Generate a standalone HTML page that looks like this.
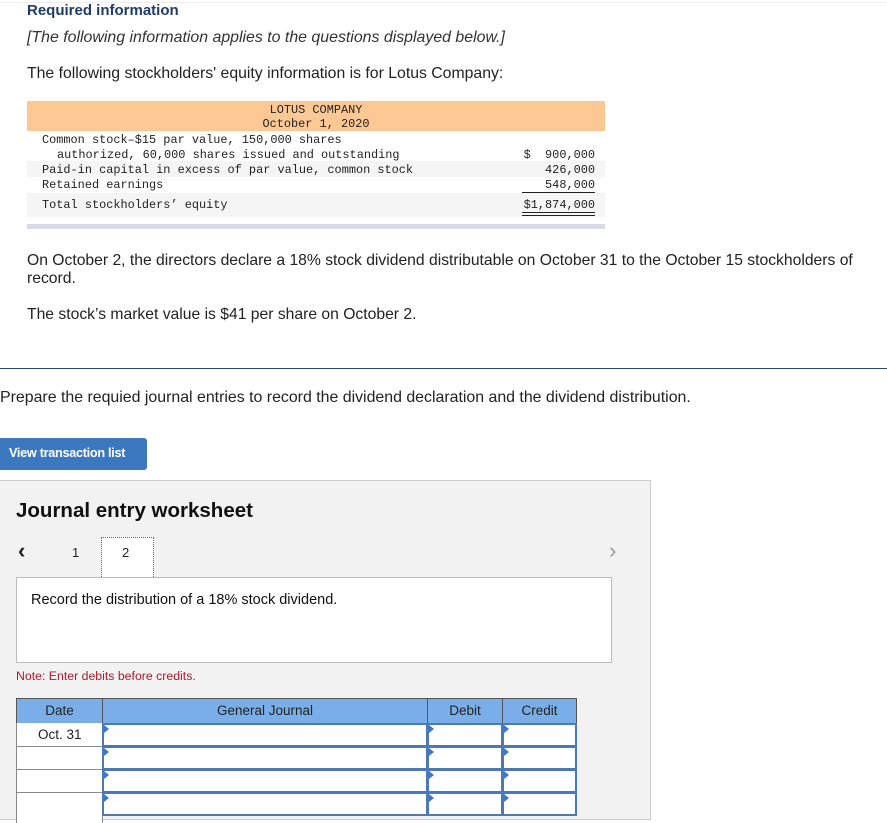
<!DOCTYPE html>
<html><head><meta charset="utf-8"><style>
*{margin:0;padding:0;box-sizing:border-box}
body{width:887px;height:812px;overflow:hidden;background:#fff;font-family:"Liberation Sans",sans-serif;color:#222;position:relative}
.a{position:absolute;white-space:nowrap}
.m{font-family:"Liberation Mono",monospace;font-size:11.9px;color:#222}
.t{font-size:15.7px;letter-spacing:0}
.cell{position:absolute;border:1px solid #555}
.inp{position:absolute;background:#fff;border:2px solid #4a78b8}
.tri{position:absolute;width:0;height:0;border-top:4px solid transparent;border-bottom:4px solid transparent;border-left:5px solid #3a78c8}
</style></head><body>
<div class="a" style="left:0;top:2px;width:887px;height:1px;background:#eee"></div>
<div class="a" style="left:27px;top:2px;font-size:15px;font-weight:bold;color:#1f3c68">Required information</div>
<div class="a t" style="left:27px;top:29px;font-style:italic;color:#333;font-size:15.9px">[The following information applies to the questions displayed below.]</div>
<div class="a t" style="left:27px;top:65px;font-size:15.8px">The following stockholders' equity information is for Lotus Company:</div>

<div class="a" style="left:27px;top:101px;width:578px;height:30px;background:#fdc894"></div>
<div class="a m" style="left:27px;top:103px;width:578px;text-align:center;line-height:14px">LOTUS COMPANY<br>October 1, 2020</div>
<div class="a" style="left:27px;top:161px;width:578px;height:16px;background:#f5f5f5"></div>
<div class="a" style="left:27px;top:193px;width:578px;height:24px;background:#f5f5f5"></div>
<div class="a m" style="left:42px;top:133px">Common stock–$15 par value, 150,000 shares</div>
<div class="a m" style="left:57px;top:148px">authorized, 60,000 shares issued and outstanding</div>
<div class="a m" style="left:42px;top:163px">Paid-in capital in excess of par value, common stock</div>
<div class="a m" style="left:42px;top:178px">Retained earnings</div>
<div class="a m" style="left:42px;top:198px">Total stockholders’ equity</div>
<div class="a m" style="left:500px;width:95px;text-align:right;top:148px">$&nbsp;&nbsp;900,000</div>
<div class="a m" style="left:500px;width:95px;text-align:right;top:163px">426,000</div>
<div class="a m" style="left:500px;width:95px;text-align:right;top:178px">548,000</div>
<div class="a" style="left:522px;top:192px;width:73px;height:1px;background:#222"></div>
<div class="a m" style="left:500px;width:95px;text-align:right;top:198px">$1,874,000</div>
<div class="a" style="left:522px;top:212px;width:73px;height:4px;border-top:1px solid #222;border-bottom:1px solid #222"></div>
<div class="a" style="left:27px;top:224px;width:578px;height:5px;background:#d8dbe6"></div>

<div class="a t" style="left:27px;top:252px">On October 2, the directors declare a 18% stock dividend distributable on October 31 to the October 15 stockholders of</div>
<div class="a t" style="left:27px;top:270px">record.</div>
<div class="a t" style="left:27px;top:306px">The stock’s market value is $41 per share on October 2.</div>

<div class="a" style="left:0;top:368px;width:887px;height:1px;background:#2a4a78"></div>
<div class="a t" style="left:0;top:389px;font-size:15.9px">Prepare the requied journal entries to record the dividend declaration and the dividend distribution.</div>

<div class="a" style="left:0;top:438px;width:147px;height:32px;background:#3b78c0;border-radius:0 3px 3px 0;color:#fff;font-size:12.7px;font-weight:bold;padding:8px 0 0 9px;letter-spacing:-0.3px">View transaction list</div>

<div class="a" style="left:-1px;top:480px;width:652px;height:340px;background:#f2f2f2;border:1px solid #ccc"></div>
<div class="a" style="left:16px;top:499px;font-size:20.5px;font-weight:bold;color:#111">Journal entry worksheet</div>
<div class="a" style="left:18px;top:538px;font-size:22px;color:#222;font-weight:bold">&lsaquo;</div>
<div class="a" style="left:72px;top:545px;font-size:13px">1</div>
<div class="a" style="left:101px;top:537px;width:53px;height:42px;background:#fff;border:1px dotted #3a6db0"></div>
<div class="a" style="left:122px;top:545px;font-size:13px">2</div>
<div class="a" style="left:609px;top:538px;font-size:22px;color:#999">&rsaquo;</div>
<div class="a" style="left:16px;top:577px;width:596px;height:86px;background:#fff;border:1px solid #bbb"></div>
<div class="a" style="left:31px;top:592px;font-size:14.5px;color:#111">Record the distribution of a 18% stock dividend.</div>
<div class="a" style="left:16px;top:669px;font-size:12.3px;color:#b0192b">Note: Enter debits before credits.</div>

<div class="cell" style="left:16px;top:698px;width:87px;height:26px;background:#7aaee8;text-align:center;font-size:13.5px;padding-top:4px">Date</div>
<div class="cell" style="left:102px;top:698px;width:326px;height:26px;background:#7aaee8;text-align:center;font-size:13.5px;padding-top:4px">General Journal</div>
<div class="cell" style="left:427px;top:698px;width:76px;height:26px;background:#7aaee8;text-align:center;font-size:13.5px;padding-top:4px">Debit</div>
<div class="cell" style="left:502px;top:698px;width:75px;height:26px;background:#7aaee8;text-align:center;font-size:13.5px;padding-top:4px">Credit</div>

<div class="a" style="left:16px;top:723px;width:87px;height:100px;border-left:1px solid #888;border-right:1px solid #888;background:#fff"></div>
<div class="a" style="left:16px;top:746px;width:87px;height:1px;background:#888"></div>
<div class="a" style="left:16px;top:769px;width:87px;height:1px;background:#888"></div>
<div class="a" style="left:16px;top:792px;width:87px;height:1px;background:#888"></div>
<div class="a" style="left:38px;top:727px;font-size:13.5px">Oct. 31</div>

<div class="inp" style="left:102px;top:723px;width:326px;height:24px"></div>
<div class="inp" style="left:427px;top:723px;width:76px;height:24px"></div>
<div class="inp" style="left:502px;top:723px;width:75px;height:24px"></div>
<div class="inp" style="left:102px;top:746px;width:326px;height:24px"></div>
<div class="inp" style="left:427px;top:746px;width:76px;height:24px"></div>
<div class="inp" style="left:502px;top:746px;width:75px;height:24px"></div>
<div class="inp" style="left:102px;top:769px;width:326px;height:24px"></div>
<div class="inp" style="left:427px;top:769px;width:76px;height:24px"></div>
<div class="inp" style="left:502px;top:769px;width:75px;height:24px"></div>
<div class="inp" style="left:102px;top:792px;width:326px;height:24px"></div>
<div class="inp" style="left:427px;top:792px;width:76px;height:24px"></div>
<div class="inp" style="left:502px;top:792px;width:75px;height:24px"></div>

<div class="tri" style="left:104px;top:725px"></div><div class="tri" style="left:429px;top:725px"></div><div class="tri" style="left:504px;top:725px"></div>
<div class="tri" style="left:104px;top:748px"></div><div class="tri" style="left:429px;top:748px"></div><div class="tri" style="left:504px;top:748px"></div>
<div class="tri" style="left:104px;top:771px"></div><div class="tri" style="left:429px;top:771px"></div><div class="tri" style="left:504px;top:771px"></div>
<div class="tri" style="left:104px;top:794px"></div><div class="tri" style="left:429px;top:794px"></div><div class="tri" style="left:504px;top:794px"></div>
</body></html>
